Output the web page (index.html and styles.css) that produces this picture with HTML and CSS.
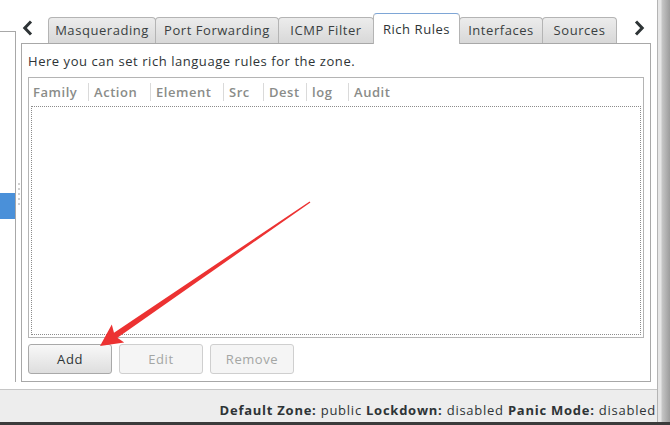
FILE: index.html
```html
<!DOCTYPE html>
<html lang="en">
<head>
    <meta charset="UTF-8">
    <title>Firewall Configuration</title>
    <link rel="stylesheet" href="styles.css">
</head>
<body>
    <div class="window">
        <div class="app">
            <div class="main">
                <div class="sidebar">
                    <div class="zone-list">
                        <div class="zone-selected"></div>
                    </div>
                </div>
                <div class="pane-handle"><span class="grip"></span></div>

                <div class="notebook">
                    <div class="tab-row">
                        <span class="tab-scroll">
                            <svg width="11" height="16" viewBox="0 0 11 16"><polyline points="9,1.5 2.8,8 9,14.5" fill="none" stroke="#2e3436" stroke-width="3"/></svg>
                        </span>
                        <div class="tabs">
                            <div class="tab">Masquerading</div>
                            <div class="tab">Port Forwarding</div>
                            <div class="tab">ICMP Filter</div>
                            <div class="tab active">Rich Rules</div>
                            <div class="tab">Interfaces</div>
                            <div class="tab">Sources</div>
                        </div>
                        <span class="tab-scroll tab-scroll-right">
                            <svg width="11" height="16" viewBox="0 0 11 16"><polyline points="2,1.5 8.2,8 2,14.5" fill="none" stroke="#2e3436" stroke-width="3"/></svg>
                        </span>
                    </div>

                    <div class="tab-panel">
                        <p class="hint">Here you can set rich language rules for the zone.</p>
                        <div class="tree">
                            <div class="tree-header">
                                <div class="col">Family</div>
                                <div class="col">Action</div>
                                <div class="col">Element</div>
                                <div class="col">Src</div>
                                <div class="col">Dest</div>
                                <div class="col">log</div>
                                <div class="col">Audit</div>
                            </div>
                            <div class="tree-body"></div>
                        </div>
                        <div class="button-row">
                            <button class="btn">Add</button>
                            <button class="btn" disabled>Edit</button>
                            <button class="btn" disabled>Remove</button>
                        </div>
                    </div>
                </div>
            </div>

            <div class="statusbar">
                <b>Default Zone:</b> public <b>Lockdown:</b> disabled <b>Panic Mode:</b> disabled
            </div>
        </div>
        <div class="window-edge"></div>
    </div>
    <div class="taskbar"></div>

    <!-- red annotation arrow drawn over the screenshot -->
    <svg class="annotation" width="670" height="425" viewBox="0 0 670 425">
        <polygon points="100,346 124.2,342.6 117.4,337.7 310.4,202.5 309.6,201.5 114,332.7 111.8,324.4" fill="#ec3232"/>
    </svg>
</body>
</html>
```

FILE: styles.css
```css
/* Basic styling */
body {
    margin: 0;
    padding: 0;
    width: 670px;
    height: 425px;
    overflow: hidden;
    background-color: #fff;
    font-family: "Open Sans", "DejaVu Sans", sans-serif;
    font-size: 13px;
    letter-spacing: 0.55px;
    color: #2e3436;
}

.window {
    display: flex;
    height: 422px;
}

.app {
    width: 657px;
    display: flex;
    flex-direction: column;
    border-right: 1px solid #b4b4b4;
}

.window-edge {
    flex: 1;
    background: linear-gradient(to right, #e6e6e6 0, #e6e6e6 3px, #c6c6c6 4px, #9c9c9c 100%);
}

.taskbar {
    height: 3px;
    background-color: #3b3b3b;
}

.main {
    height: 389px;
    display: flex;
}

/* Left zone list (mostly cut off) */
.sidebar {
    width: 16px;
}

.zone-list {
    margin-top: 31px;
    height: 351px;
    box-sizing: border-box;
    border-top: 1px solid #a8a8a8;
    border-right: 1px solid #a8a8a8;
    padding-top: 161px;
}

.zone-selected {
    height: 26px;
    background-color: #4a90d9;
}

.pane-handle {
    width: 5px;
    display: flex;
    justify-content: center;
}

.grip {
    margin-top: 183px;
    width: 2px;
    height: 25px;
    background: repeating-linear-gradient(to bottom, #d0d0d0 0, #d0d0d0 2px, transparent 2px, transparent 5px);
}

/* Notebook */
.notebook {
    width: 630px;
    padding-top: 13px;
}

.tab-row {
    height: 30px;
    display: flex;
    align-items: flex-end;
}

.tab-scroll {
    width: 27px;
    height: 30px;
    display: flex;
    align-items: center;
    padding-left: 1px;
    box-sizing: border-box;
}

.tab-scroll-right {
    margin-left: auto;
    width: 14px;
    padding-left: 0;
    margin-right: 3px;
}

.tabs {
    display: flex;
    align-items: flex-end;
}

.tab {
    height: 26px;
    line-height: 25px;
    box-sizing: border-box;
    border: 1px solid #b4b4b4;
    border-bottom: none;
    border-radius: 4px 4px 0 0;
    background: linear-gradient(to bottom, #ececec, #d8d8d8);
    color: #3a3f41;
    text-align: center;
    white-space: nowrap;
}

.tab + .tab {
    margin-left: -1px;
}

.tab:nth-child(1) { width: 108px; }
.tab:nth-child(2) { width: 124px; }
.tab:nth-child(3) { width: 96px; }
.tab:nth-child(4) { width: 87px; }
.tab:nth-child(5) { width: 84px; }
.tab:nth-child(6) { width: 75px; }

.tab.active {
    position: relative;
    z-index: 1;
    height: 31px;
    line-height: 31px;
    margin-bottom: -1px;
    background: #fff;
    border-top-color: #7ea6d6;
    color: #2e3436;
}

.tab-panel {
    height: 339px;
    box-sizing: border-box;
    border: 1px solid #a8a8a8;
    background-color: #fff;
    padding: 0 6px;
    display: flex;
    flex-direction: column;
}

.hint {
    margin: 0;
    padding-top: 8px;
    line-height: 18px;
}

/* Rules list */
.tree {
    margin-top: 7px;
    height: 261px;
    box-sizing: border-box;
    border: 1px solid #b4b4b4;
    display: flex;
    flex-direction: column;
}

.tree-header {
    height: 28px;
    display: grid;
    grid-template-columns: 59px 62px 73px 40px 43px 42px 1fr;
    align-items: center;
}

.col {
    line-height: 18px;
    padding-left: 5px;
    font-weight: 600;
    color: #8a8c89;
}

.col:first-child {
    padding-left: 4px;
}

.col + .col {
    border-left: 1px solid #dadada;
}

.tree-body {
    flex: 1;
    margin: 0 2px 2px 2px;
    border: 1px dotted #8c8c8c;
}

/* Buttons */
.button-row {
    display: flex;
    gap: 7px;
    margin-top: 6px;
}

.btn {
    width: 84px;
    height: 30px;
    font-family: inherit;
    font-size: 13px;
    letter-spacing: 0.55px;
    color: #2e3436;
    border: 1px solid #a9a9a9;
    border-radius: 3px;
    background: linear-gradient(to bottom, #f8f8f8, #dedede);
    padding: 0;
}

.btn:disabled {
    color: #a4a6a4;
    border-color: #cfcfcf;
    background: #f5f5f5;
}

/* Status bar */
.statusbar {
    flex: 1;
    border-top: 1px solid #c6c6c6;
    background-color: #ededed;
    text-align: right;
    line-height: 18px;
    padding-top: 11px;
    padding-right: 1px;
    letter-spacing: 0.75px;
    white-space: nowrap;
}

.statusbar b {
    font-weight: 700;
}

.annotation {
    position: absolute;
    left: 0;
    top: 0;
    pointer-events: none;
}
```
